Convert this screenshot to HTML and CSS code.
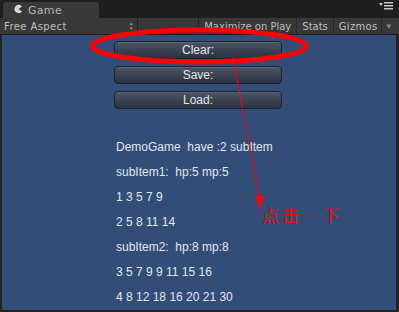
FILE: index.html
```html
<!DOCTYPE html>
<html lang="en">
<head>
  <meta charset="UTF-8">
  <title>Game</title>
  <link rel="stylesheet" href="styles.css">
</head>
<body>
  <div class="window">
    <div class="tabbar">
      <div class="tab">
        <svg class="tab-icon" width="10" height="10" viewBox="0 0 10 10">
          <path d="M9 2.5 A4.2 4.2 0 1 0 9 7.5 L5.5 5 Z" fill="#d8d8d8"/>
        </svg>
        <span>Game</span>
      </div>
      <div class="tab-menu">
        <svg width="14" height="8" viewBox="0 0 14 8">
          <path d="M0 1 H4 L2 4 Z" fill="#c8c8c8"/>
          <rect x="5" y="0" width="9" height="1.5" fill="#c8c8c8"/>
          <rect x="5" y="3" width="9" height="1.5" fill="#c8c8c8"/>
          <rect x="5" y="6" width="9" height="1.5" fill="#c8c8c8"/>
        </svg>
      </div>
    </div>

    <div class="toolbar">
      <div class="tool aspect">
        <span>Free Aspect</span>
        <span class="updown">&#x25B4;<br>&#x25BE;</span>
      </div>
      <div class="tool-spacer"></div>
      <div class="tool">Maximize on Play</div>
      <div class="tool">Stats</div>
      <div class="tool gizmos">Gizmos</div>
      <div class="tool caret">&#x25BE;</div>
    </div>

    <div class="view">
      <div class="buttons">
        <button class="btn">Clear:</button>
        <button class="btn">Save:</button>
        <button class="btn">Load:</button>
      </div>

      <div class="lines">
        <p>DemoGame&nbsp; have :2 subItem</p>
        <p>subItem1:&nbsp; hp:5 mp:5</p>
        <p>1 3 5 7 9</p>
        <p>2 5 8 11 14</p>
        <p>subItem2:&nbsp; hp:8 mp:8</p>
        <p>3 5 7 9 9 11 15 16</p>
        <p>4 8 12 18 16 20 21 30</p>
      </div>
    </div>

    <svg class="markup" width="399" height="312" viewBox="0 0 399 312">
      <ellipse cx="199" cy="46" rx="107" ry="16" fill="none" stroke="#ff0000" stroke-width="5"/>
      <line x1="233" y1="57" x2="259" y2="198" stroke="#ff0000" stroke-width="1.2" stroke-dasharray="6 1.5"/>
      <path d="M255 196 L264 196 L260 209 Z" fill="#ff0000"/>
    </svg>
    <div class="note">点击<span class="faint">一</span>下</div>
  </div>
</body>
</html>
```

FILE: styles.css
```css
body {
  margin: 0;
  background-color: #1b1b1b;
  font-family: "Liberation Sans", Arial, sans-serif;
}

.window {
  position: relative;
  width: 399px;
  height: 312px;
  display: flex;
  flex-direction: column;
  background-color: #232323;
  overflow: hidden;
}

.tabbar {
  flex-shrink: 0;
  height: 18px;
  display: flex;
  align-items: flex-end;
  justify-content: space-between;
  padding-left: 3px;
  background-color: #1f1f1f;
}

.tab {
  width: 96px;
  height: 16px;
  display: flex;
  align-items: center;
  gap: 5px;
  padding-left: 10px;
  box-sizing: border-box;
  background-color: #393939;
  border-radius: 4px 4px 0 0;
  color: #b4b4b4;
  font-family: "DejaVu Sans", sans-serif;
  font-size: 11px;
  letter-spacing: 0.3px;
}

.tab-icon {
  margin-top: -2px;
}

.tab-menu {
  padding: 0 6px 4px 0;
}

.toolbar {
  flex-shrink: 0;
  height: 16px;
  display: flex;
  align-items: stretch;
  background-color: #383838;
  border-bottom: 1px solid #1e1e1e;
  font-family: "DejaVu Sans", sans-serif;
  font-size: 10px;
  color: #bfbfbf;
}

.tool {
  display: flex;
  align-items: center;
  padding: 0 5px;
  border-left: 1px solid #262626;
}

.aspect {
  width: 138px;
  box-sizing: border-box;
  justify-content: space-between;
  padding: 0 4px;
  border-left: none;
  border-right: 1px solid #262626;
  letter-spacing: 0.4px;
}

.updown {
  font-size: 5px;
  line-height: 5px;
  color: #9a9a9a;
  text-align: center;
}

.tool-spacer {
  flex: 1;
}

.gizmos {
  padding-right: 4px;
  letter-spacing: 0.3px;
}

.caret {
  padding: 0 8px 0 4px;
  font-size: 9px;
  color: #8c8c8c;
}

.view {
  flex: 1;
  min-height: 0;
  overflow: hidden;
  margin: 0 3px 2px 2px;
  background-color: #314d78;
  display: flex;
  flex-direction: column;
  align-items: flex-start;
  padding: 6px 0 0 112px;
}

.buttons {
  flex-shrink: 0;
  display: flex;
  flex-direction: column;
  gap: 7px;
}

.btn {
  width: 168px;
  height: 18px;
  padding: 0;
  border: 1px solid #1b2330;
  border-radius: 4px;
  background: linear-gradient(#4c5566, #2b3240);
  box-shadow: inset 0 1px 0 #5d6677;
  color: #e6e6e6;
  font-family: "Liberation Sans", Arial, sans-serif;
  font-size: 12px;
}

.lines {
  flex-shrink: 0;
  margin-top: 31px;
  padding-left: 2px;
  color: #e2e6ee;
  font-size: 12px;
}

.lines p {
  margin: 0;
  height: 25px;
  line-height: 14px;
}

.markup {
  position: absolute;
  left: 0;
  top: 0;
  pointer-events: none;
}

.note {
  position: absolute;
  left: 262px;
  top: 205px;
  color: #ff0000;
  font-family: "Noto Sans CJK SC", sans-serif;
  font-size: 17px;
  letter-spacing: 3px;
  line-height: 20px;
}

.faint {
  color: rgba(255, 0, 0, 0.35);
}
```
